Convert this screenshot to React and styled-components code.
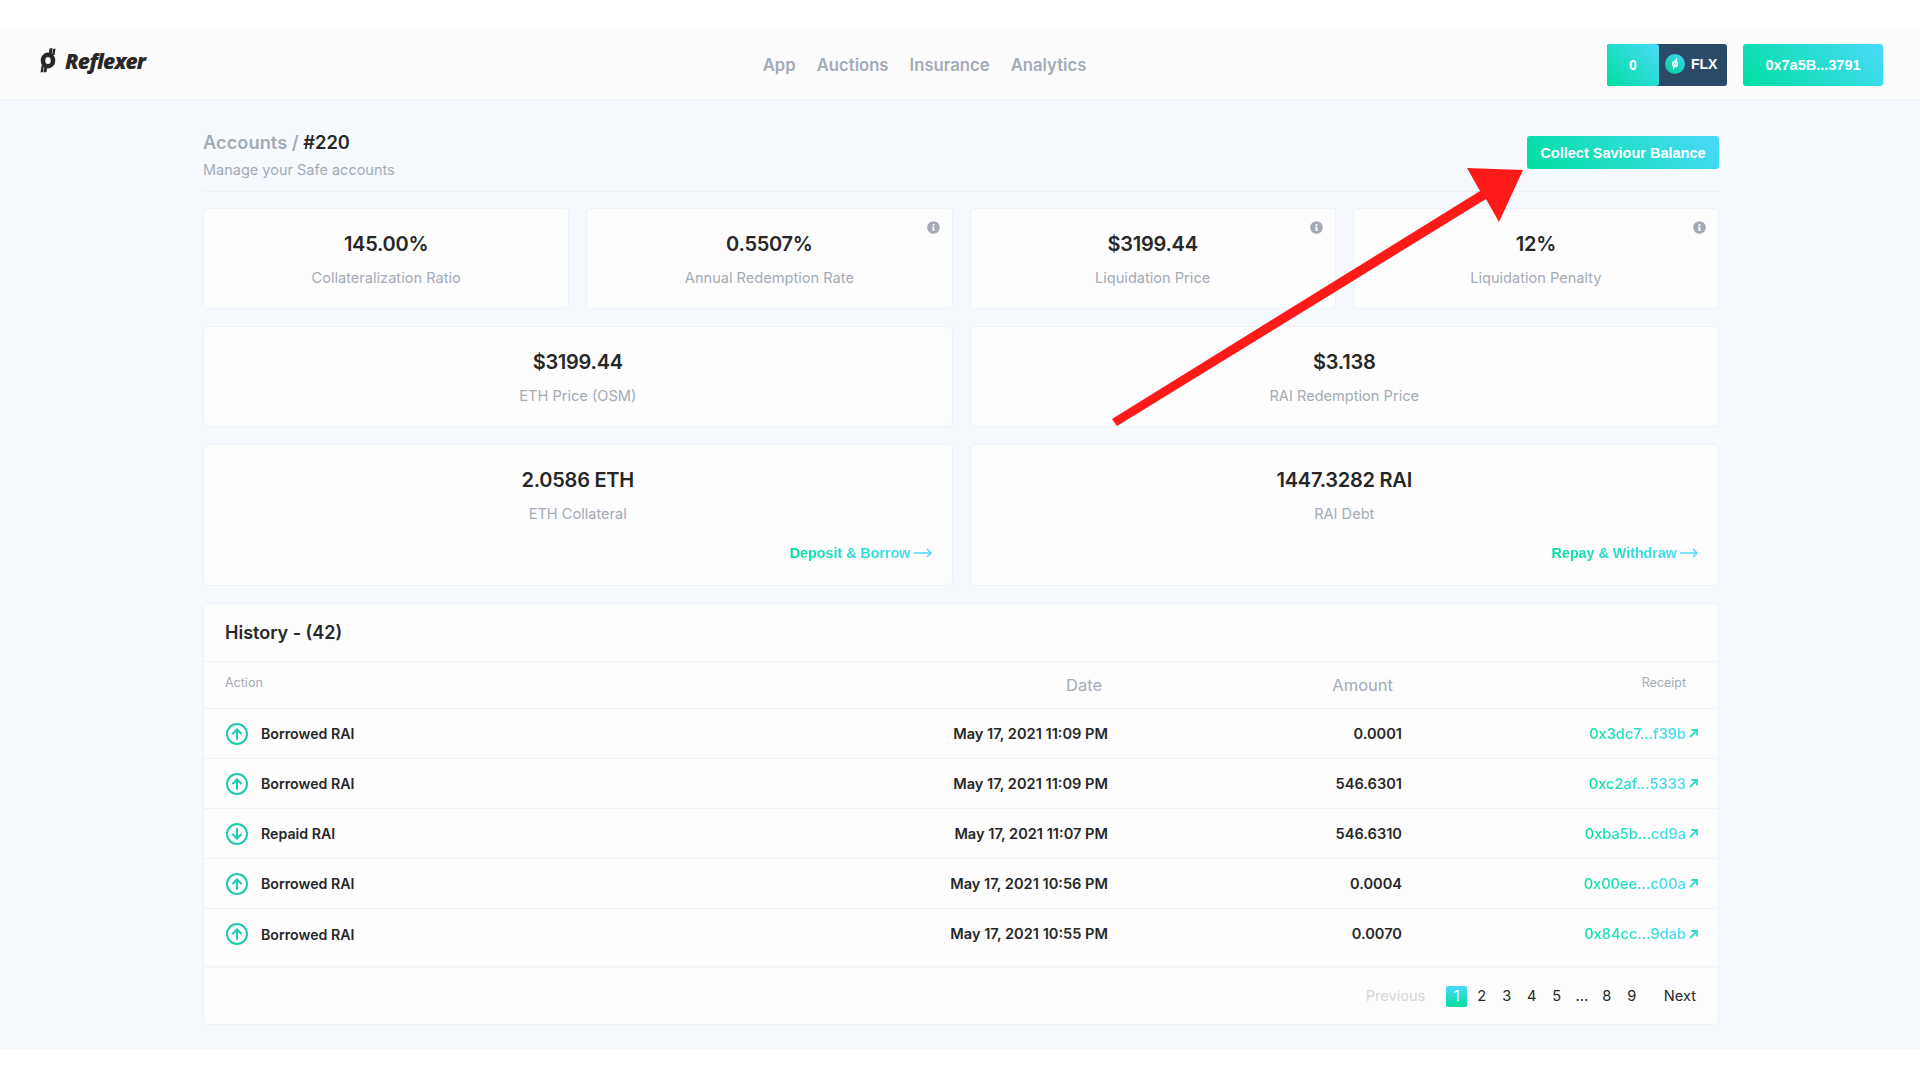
import styled, { createGlobalStyle } from "styled-components";
import { FaInfoCircle } from "react-icons/fa";

const gradient = "linear-gradient(225deg, #4ad9fb 0%, #00e09f 100%)";

const GlobalStyle = createGlobalStyle`
   * {
      box-sizing: border-box;
   }

   body {
      margin: 0;
      background: #fff;
      font-family: Inter, "Liberation Sans", sans-serif;
      color: #272727;
   }
`;

const Screen = styled.div`
   position: relative;
   width: 1920px;
   height: 1080px;
   padding-top: 30px;
   overflow: hidden;
`;

const Frame = styled.div`
   height: 1019px;
   background: #f6f9fd;
`;

const Header = styled.header`
   display: flex;
   justify-content: space-between;
   align-items: center;
   height: 70px;
   padding: 0 37px 0 40px;
   background: #fcfcfc;
   border-bottom: 1px solid #eef3f9;
`;

const Logo = styled.div`
   display: flex;
   align-items: center;
   gap: 9px;
   width: 202px;
   height: 40px;
   margin-top: -8px;
`;

const LogoText = styled.span`
   font-family: "Open Sans", sans-serif;
   font-size: 21px;
   font-style: italic;
   font-weight: 800;
   letter-spacing: -0.8px;
   color: #272727;
`;

const Nav = styled.nav`
   display: flex;
   gap: 21px;
`;

const NavItem = styled.a`
   font-size: 16.7px;
   font-weight: 600;
   color: #a4abb7;
`;

const Wallet = styled.div`
   display: flex;
   gap: 16px;
`;

const FlxButton = styled.div`
   display: flex;
   width: 120px;
   height: 42px;
   border-radius: 3px;
   overflow: hidden;
   background: #2b4a6a;
   font-family: "Liberation Sans", sans-serif;
   font-size: 14px;
   font-weight: 700;
   color: #fff;
`;

const FlxAmount = styled.div`
   display: flex;
   justify-content: center;
   align-items: center;
   width: 52px;
   border-radius: 0 3px 3px 0;
   background: linear-gradient(45deg, #00e09f 0%, #4ad9fb 100%);
`;

const FlxLabel = styled.div`
   display: flex;
   align-items: center;
   gap: 6px;
   padding-left: 6px;
   margin-top: -1px;
`;

const FlxCoin = styled.span`
   display: flex;
   justify-content: center;
   align-items: center;
   width: 20px;
   height: 20px;
   border-radius: 50%;
   background: linear-gradient(20deg, #00d09a 0%, #3fd6f0 100%);
`;

const AddressButton = styled.div`
   display: flex;
   justify-content: center;
   align-items: center;
   width: 140px;
   height: 42px;
   border-radius: 3px;
   background: ${gradient};
   font-family: "Liberation Sans", sans-serif;
   font-size: 14.5px;
   font-weight: 700;
   color: #fff;
`;

const Main = styled.main`
   width: 1516px;
   margin: 0 0 0 203px;
`;

const PageHead = styled.div`
   display: flex;
   justify-content: space-between;
   height: 92px;
   margin-bottom: 16px;
   padding-top: 30px;
   border-bottom: 1px solid #eef3f9;
`;

const Crumbs = styled.h1`
   margin: 0;
   font-size: 18.3px;
   line-height: 24px;
   font-weight: 600;
   color: #a4abb7;

   span {
      color: #272727;
   }
`;

const SubTitle = styled.p`
   margin: 6px 0 0;
   font-size: 14.5px;
   line-height: 20px;
   color: #a4abb7;
`;

const CollectButton = styled.button`
   width: 192px;
   height: 33px;
   margin-top: 6px;
   border: 0;
   border-radius: 3px;
   background: ${gradient};
   font-family: "Liberation Sans", sans-serif;
   font-size: 14.5px;
   font-weight: 700;
   color: #fff;
`;

const StatGrid = styled.div`
   display: grid;
   grid-template-columns: repeat(${({ $cols }) => $cols}, 1fr);
   gap: 17px;
   margin-bottom: 17px;
`;

const Card = styled.div`
   position: relative;
   display: flex;
   flex-direction: column;
   align-items: center;
   height: ${({ $tall }) => ($tall ? "142px" : "101px")};
   padding-top: 22px;
   border: 1px solid #eef3f9;
   border-radius: 4px;
   background: #fdfdfd;
`;

const StatValue = styled.div`
   font-size: 20px;
   line-height: 26px;
   font-weight: 600;
   letter-spacing: -0.25px;
   color: #272727;
`;

const StatLabel = styled.div`
   margin-top: 12px;
   font-size: 14.6px;
   line-height: 18px;
   color: #a4abb7;
`;

const InfoBadge = styled.span`
   position: absolute;
   top: 12px;
   right: 12px;
   display: flex;
   color: #a4abb7;
`;

const CardLink = styled.a`
   position: absolute;
   right: 20px;
   bottom: 24px;
   display: flex;
   align-items: center;
   gap: 3px;
   font-family: "Liberation Sans", sans-serif;
   font-size: 14.3px;
   font-weight: 700;
`;

const GradientText = styled.span`
   background: linear-gradient(90deg, #00e09f 0%, #4ad9fb 100%);
   -webkit-background-clip: text;
   background-clip: text;
   color: transparent;
`;

const HistoryCard = styled.section`
   height: 422px;
   border: 1px solid #eef3f9;
   border-radius: 4px;
   background: #fdfdfd;
`;

const HistoryTitle = styled.h2`
   display: flex;
   align-items: center;
   height: 58px;
   margin: 0;
   padding-left: 21px;
   border-bottom: 1px solid #eef3f9;
   font-size: 18px;
   font-weight: 600;
   color: #272727;
`;

const Row = styled.div`
   display: grid;
   grid-template-columns: 1fr 300px 294px 296px;
   align-items: center;
   height: ${({ $head }) => ($head ? "47px" : "50px")};
   padding: 0 20px 0 21px;
   border-bottom: ${({ $last }) => ($last ? "0" : "1px solid #eef3f9")};
`;

const SmallHead = styled.div`
   margin-top: -5px;
   padding-right: ${({ $inset }) => $inset || 0}px;
   font-size: 12.5px;
   text-align: ${({ $right }) => ($right ? "right" : "left")};
   color: #a4abb7;
`;

const LargeHead = styled.div`
   padding-right: ${({ $inset }) => $inset}px;
   font-size: 16.5px;
   text-align: right;
   color: #a4abb7;
`;

const ActionCell = styled.div`
   display: flex;
   align-items: center;
   gap: 13px;
   margin-left: 1px;
   font-size: 14.2px;
   font-weight: 600;
   color: #272727;
`;

const ValueCell = styled.div`
   font-size: 14.6px;
   font-weight: 600;
   text-align: right;
   color: #272727;
`;

const ReceiptCell = styled.a`
   display: flex;
   justify-content: flex-end;
   align-items: center;
   gap: 3px;
   font-size: 14.6px;
   font-weight: 500;
`;

const Pager = styled.div`
   display: flex;
   justify-content: flex-end;
   align-items: center;
   height: 58px;
   margin-top: 7px;
   padding-right: 22px;
   border-top: 2px solid #f3f6fa;
   font-size: 14.6px;
   color: #272727;
`;

const PagerEdge = styled.span`
   margin: ${({ $next }) => ($next ? "0 0 0 17.5px" : "0 21px 0 0")};
   color: ${({ $off }) => ($off ? "#d4d6da" : "#272727")};
`;

const PageNumber = styled.span`
   display: flex;
   justify-content: center;
   align-items: center;
   width: 21px;
   height: 21px;
   margin-right: 4px;
   border-radius: 2px;
   background: ${({ $active }) => ($active ? "linear-gradient(0deg, #00e09f 0%, #4ad9fb 100%)" : "none")};
   color: ${({ $active }) => ($active ? "#fff" : "#272727")};
`;

const Annotation = styled.svg`
   position: absolute;
   top: 0;
   left: 0;
   pointer-events: none;
`;

const topStats = [
   { value: "145.00%", label: "Collateralization Ratio" },
   { value: "0.5507%", label: "Annual Redemption Rate", info: true },
   { value: "$3199.44", label: "Liquidation Price", info: true },
   { value: "12%", label: "Liquidation Penalty", info: true },
];

const midStats = [
   { value: "$3199.44", label: "ETH Price (OSM)" },
   { value: "$3.138", label: "RAI Redemption Price" },
];

const lowStats = [
   { value: "2.0586 ETH", label: "ETH Collateral", link: "Deposit & Borrow" },
   { value: "1447.3282 RAI", label: "RAI Debt", link: "Repay & Withdraw" },
];

const history = [
   { action: "Borrowed RAI", up: true, date: "May 17, 2021 11:09 PM", amount: "0.0001", hash: "0x3dc7...f39b" },
   { action: "Borrowed RAI", up: true, date: "May 17, 2021 11:09 PM", amount: "546.6301", hash: "0xc2af...5333" },
   { action: "Repaid RAI", up: false, date: "May 17, 2021 11:07 PM", amount: "546.6310", hash: "0xba5b...cd9a" },
   { action: "Borrowed RAI", up: true, date: "May 17, 2021 10:56 PM", amount: "0.0004", hash: "0x00ee...c00a" },
   { action: "Borrowed RAI", up: true, date: "May 17, 2021 10:55 PM", amount: "0.0070", hash: "0x84cc...9dab" },
];

const pages = ["1", "2", "3", "4", "5", "...", "8", "9"];

function LogoMark() {
   return (
      <svg width="16" height="25" viewBox="0 0 16 25" fill="none">
         <path d="M9.5 0.5 12.5 0 11.5 7 8.5 7.5Z M13 1 15.5 0.5 14.5 7 12 7.5Z" fill="#272727" />
         <path d="M1.5 17.5 4 17 3 24 0.5 24.5Z M4.5 17.5 7.5 17 6.5 24 3.5 24.5Z" fill="#272727" />
         <ellipse cx="8" cy="12.5" rx="5" ry="5.8" stroke="#272727" strokeWidth="4.6" />
      </svg>
   );
}

function CoinMark() {
   return (
      <svg width="10" height="14" viewBox="0 0 10 14" fill="none">
         <ellipse cx="5" cy="7" rx="2.2" ry="2.8" stroke="#fff" strokeWidth="1.5" />
         <path d="M6.8 1.5 3.2 12.5" stroke="#fff" strokeWidth="1.3" />
      </svg>
   );
}

function DirectionIcon({ up }) {
   return (
      <svg width="22" height="22" viewBox="0 0 22 22" fill="none" stroke="#1ec9ad" strokeLinecap="round" strokeLinejoin="round">
         <circle cx="11" cy="11" r="10" strokeWidth="2" />
         <g strokeWidth="2" transform={up ? undefined : "rotate(180 11 11)"}>
            <path d="M11 16V6.5" />
            <path d="M7 10.5 11 6.5 15 10.5" />
         </g>
      </svg>
   );
}

function LongArrow() {
   return (
      <svg width="18" height="10" viewBox="0 0 18 10" fill="none" stroke="#4ad9fb" strokeWidth="1.5">
         <path d="M0 5H17" />
         <path d="M13 1 17 5 13 9" />
      </svg>
   );
}

function OutArrow() {
   return (
      <svg width="9" height="9" viewBox="0 0 9 9" fill="none" stroke="#2fdac8" strokeWidth="1.8">
         <path d="M1 8 8 1" />
         <path d="M2.5 1H8V6.5" />
      </svg>
   );
}

function Stat({ stat, tall }) {
   return (
      <Card $tall={tall}>
         <StatValue>{stat.value}</StatValue>
         <StatLabel>{stat.label}</StatLabel>
         {stat.info && (
            <InfoBadge>
               <FaInfoCircle size={13} />
            </InfoBadge>
         )}
         {stat.link && (
            <CardLink>
               <GradientText>{stat.link}</GradientText>
               <LongArrow />
            </CardLink>
         )}
      </Card>
   );
}

export default function App() {
   return (
      <>
         <GlobalStyle />
         <Screen>
            <Frame>
               <Header>
                  <Logo>
                     <LogoMark />
                     <LogoText>Reflexer</LogoText>
                  </Logo>
                  <Nav>
                     <NavItem>App</NavItem>
                     <NavItem>Auctions</NavItem>
                     <NavItem>Insurance</NavItem>
                     <NavItem>Analytics</NavItem>
                  </Nav>
                  <Wallet>
                     <FlxButton>
                        <FlxAmount>0</FlxAmount>
                        <FlxLabel>
                           <FlxCoin>
                              <CoinMark />
                           </FlxCoin>
                           FLX
                        </FlxLabel>
                     </FlxButton>
                     <AddressButton>0x7a5B...3791</AddressButton>
                  </Wallet>
               </Header>

               <Main>
                  <PageHead>
                     <div>
                        <Crumbs>
                           Accounts / <span>#220</span>
                        </Crumbs>
                        <SubTitle>Manage your Safe accounts</SubTitle>
                     </div>
                     <CollectButton>Collect Saviour Balance</CollectButton>
                  </PageHead>

                  <StatGrid $cols={4}>
                     {topStats.map(stat => (
                        <Stat key={stat.label} stat={stat} />
                     ))}
                  </StatGrid>
                  <StatGrid $cols={2}>
                     {midStats.map(stat => (
                        <Stat key={stat.label} stat={stat} />
                     ))}
                  </StatGrid>
                  <StatGrid $cols={2}>
                     {lowStats.map(stat => (
                        <Stat key={stat.label} stat={stat} tall />
                     ))}
                  </StatGrid>

                  <HistoryCard>
                     <HistoryTitle>History - (42)</HistoryTitle>
                     <Row $head>
                        <SmallHead>Action</SmallHead>
                        <LargeHead $inset={6}>Date</LargeHead>
                        <LargeHead $inset={9}>Amount</LargeHead>
                        <SmallHead $right $inset={12}>Receipt</SmallHead>
                     </Row>
                     {history.map((item, index) => (
                        <Row key={item.hash} $last={index === history.length - 1}>
                           <ActionCell>
                              <DirectionIcon up={item.up} />
                              {item.action}
                           </ActionCell>
                           <ValueCell>{item.date}</ValueCell>
                           <ValueCell>{item.amount}</ValueCell>
                           <ReceiptCell>
                              <GradientText>{item.hash}</GradientText>
                              <OutArrow />
                           </ReceiptCell>
                        </Row>
                     ))}
                     <Pager>
                        <PagerEdge $off>Previous</PagerEdge>
                        {pages.map((page, index) => (
                           <PageNumber key={index} $active={page === "1"}>{page}</PageNumber>
                        ))}
                        <PagerEdge $next>Next</PagerEdge>
                     </Pager>
                  </HistoryCard>
               </Main>
            </Frame>

            <Annotation width="1920" height="1080" viewBox="0 0 1920 1080">
               <polygon points="1112,419 1480,191 1467,168 1523,170 1499,222 1486,199 1117,426" fill="#ff1a1a" />
            </Annotation>
         </Screen>
      </>
   );
}
